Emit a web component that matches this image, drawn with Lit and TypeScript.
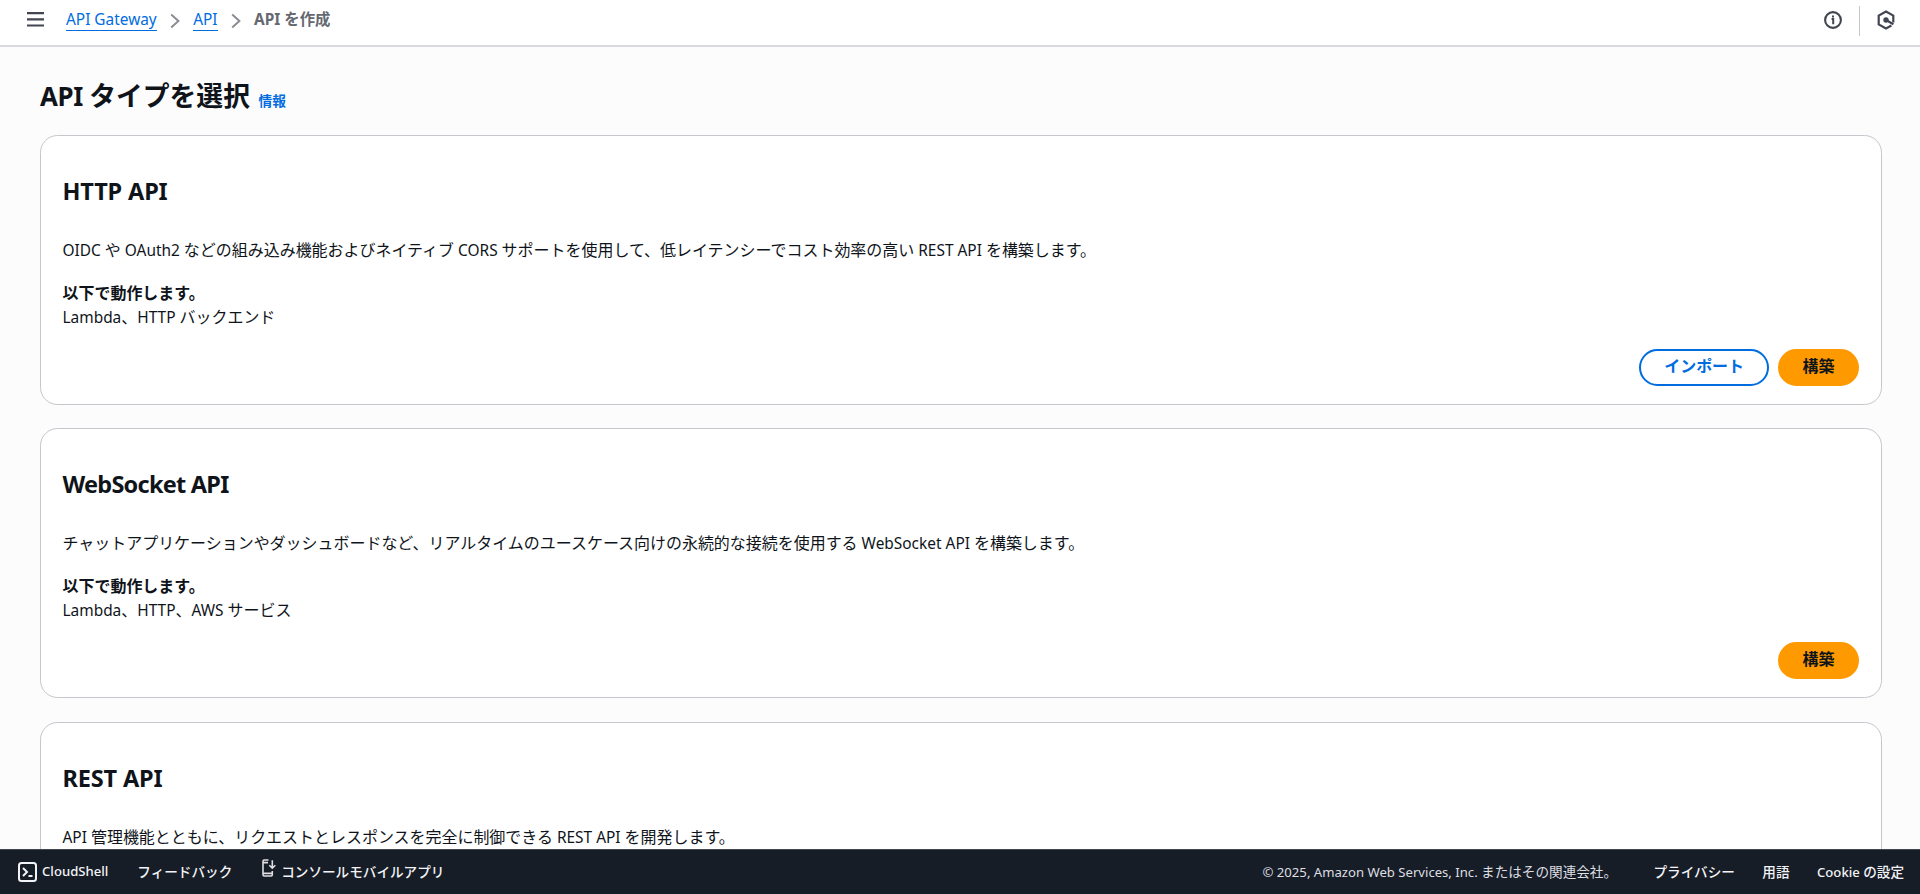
import { LitElement, html, css, svg } from "lit";
import { customElement, property } from "lit/decorators.js";
import { classMap } from "lit/directives/class-map.js";

interface ApiType {
  name: string;
  description: string;
  targets?: string;
  importable?: boolean;
}

const API_TYPES: ApiType[] = [
  {
    name: "HTTP API",
    description:
      "OIDC や OAuth2 などの組み込み機能およびネイティブ CORS サポートを使用して、低レイテンシーでコスト効率の高い REST API を構築します。",
    targets: "Lambda、HTTP バックエンド",
    importable: true,
  },
  {
    name: "WebSocket API",
    description:
      "チャットアプリケーションやダッシュボードなど、リアルタイムのユースケース向けの永続的な接続を使用する WebSocket API を構築します。",
    targets: "Lambda、HTTP、AWS サービス",
  },
  {
    name: "REST API",
    description: "API 管理機能とともに、リクエストとレスポンスを完全に制御できる REST API を開発します。",
  },
];

// Latin runs are set slightly smaller than the Japanese text around them.
const mixed = (text: string) =>
  text
    .split(/([\x20-\x7e©]+)/)
    .filter((part) => part)
    .map((part) => (/^[\x20-\x7e©]/.test(part) ? html`<span class="latin">${part}</span>` : part));

const latinStyles = css`
  .latin {
    font-size: 0.966em;
  }
`;

const chevron = html`<svg class="chevron" width="11" height="16" viewBox="0 0 11 16">
  ${svg`<path d="M1.2 1.4 8.4 8 1.2 14.6" fill="none" stroke="#8c8c94" stroke-width="2"/>`}
</svg>`;

@customElement("api-card")
export class ApiCard extends LitElement {
  @property({ attribute: false }) api!: ApiType;

  static styles = [
    latinStyles,
    css`
      :host {
        display: block;
        box-sizing: border-box;
        height: 269.5px;
        padding: 39px 22px 0 21.5px;
        border: 1px solid #c6c6cd;
        border-radius: 17.6px;
        background: #fff;
      }
      h2 {
        margin: 0;
        font-size: 23.5px;
        line-height: 32px;
        font-weight: 700;
        letter-spacing: -0.15px;
      }
      .compact {
        letter-spacing: -0.75px;
      }
      p {
        margin: 0;
        height: 24px;
        line-height: 24px;
        white-space: nowrap;
      }
      .description {
        margin-top: 31px;
      }
      .label {
        margin-top: 19px;
        font-weight: 700;
      }
      .actions {
        display: flex;
        justify-content: flex-end;
        gap: 9px;
        margin-top: 20px;
      }
      button {
        box-sizing: border-box;
        height: 37px;
        padding: 0 23px 5px;
        border: 2px solid #006ce0;
        border-radius: 22px;
        background: #fff;
        color: #006ce0;
        font: inherit;
        font-weight: 700;
      }
      .primary {
        padding: 0 22.5px 5px;
        border-color: #ff9900;
        background: #ff9900;
        color: #0f141a;
      }
    `,
  ];

  render() {
    const { name, description, targets, importable } = this.api;
    return html`
      <h2 class=${classMap({ compact: /[a-z]/.test(name) })}>${name}</h2>
      <p class="description">${mixed(description)}</p>
      ${targets
        ? html`
            <p class="label">以下で動作します。</p>
            <p>${mixed(targets)}</p>
            <div class="actions">
              ${importable ? html`<button>インポート</button>` : null}
              <button class="primary">構築</button>
            </div>
          `
        : null}
    `;
  }
}

@customElement("app-root")
export class AppRoot extends LitElement {
  static styles = [
    latinStyles,
    css`
      :host {
        display: flex;
        flex-direction: column;
        height: 894px;
        overflow: hidden;
        background: #fcfcfd;
        color: #0f141a;
        font-family: "Noto Sans", "Noto Sans CJK JP", sans-serif;
        font-size: 15.98px;
      }
      svg {
        display: block;
        flex: none;
      }
      .topbar {
        display: flex;
        flex: none;
        align-items: flex-start;
        justify-content: space-between;
        box-sizing: border-box;
        height: 47px;
        padding: 0 25px 0 27px;
        border-bottom: 2px solid #d9d9df;
        background: #fff;
      }
      .crumbs,
      .tools {
        display: flex;
        align-items: center;
        height: 40px;
      }
      .crumbs {
        font-size: 15.4px;
      }
      .tools {
        height: 39px;
      }
      .menu {
        margin-right: 22px;
      }
      .crumbs a {
        height: 21px;
        border-bottom: 1px solid #006ce0;
        color: #006ce0;
        line-height: 22px;
      }
      .chevron {
        margin: 2px 12.5px 0 13px;
      }
      .current {
        margin-top: -3px;
        color: #656871;
        font-weight: 700;
      }
      .divider {
        width: 1px;
        height: 30px;
        margin: 3px 17px 0 17px;
        background: #c6c6cd;
      }
      .content {
        flex: 1;
        min-height: 0;
        overflow: hidden;
        padding: 31px 38px 0 40px;
      }
      .heading {
        display: flex;
        align-items: baseline;
        gap: 8.5px;
        height: 57px;
      }
      h1 {
        margin: 0;
        font-size: 26.8px;
        line-height: 36px;
        font-weight: 700;
      }
      h1 .latin {
        letter-spacing: -0.4px;
      }
      .info {
        color: #006ce0;
        font-size: 13.7px;
        font-weight: 700;
      }
      .cards {
        display: flex;
        flex-direction: column;
        gap: 23.9px;
      }
      .footer {
        display: flex;
        flex: none;
        align-items: center;
        justify-content: space-between;
        box-sizing: border-box;
        height: 45px;
        padding: 0 16px 3px 18px;
        border-top: 1px solid #424650;
        background: #161d26;
        color: #f3f3f7;
        font-size: 13.6px;
        font-weight: 500;
        white-space: nowrap;
      }
      .group,
      .item {
        display: flex;
        align-items: center;
      }
      .group {
        gap: 27.5px;
      }
      .start {
        gap: 29px;
      }
      .item {
        gap: 5px;
      }
      .shell {
        margin-top: 3px;
      }
      .phone {
        margin: -6px 0 0 1px;
      }
      .legal {
        margin-right: 9px;
        color: #dedee3;
        font-weight: 400;
      }
    `,
  ];

  render() {
    return html`
      <header class="topbar">
        <nav class="crumbs">
          <svg class="menu" width="17" height="40" viewBox="0 0 17 40">
            <path d="M0 13.2h17M0 19.4h17M0 25.5h17" stroke="#424650" stroke-width="2.2" />
          </svg>
          <a>API Gateway</a>${chevron}<a>API</a>${chevron}<span class="current">API を作成</span>
        </nav>
        <div class="tools">
          <svg width="18" height="18" viewBox="0 0 18 18">
            <circle cx="9" cy="9" r="7.9" fill="none" stroke="#424650" stroke-width="2.1" />
            <path d="M7.6 8h1.6v5.2M9 4.4v2" fill="none" stroke="#424650" stroke-width="2" />
          </svg>
          <span class="divider"></span>
          <svg width="18" height="20" viewBox="0 0 18 20">
            <path d="M16.3 12.6V5.6L9 1.5 1.7 5.6v8.8L9 18.5l5.4-3" fill="none" stroke="#424650" stroke-width="2.2" />
            <circle cx="9" cy="10" r="2.7" fill="#424650" />
            <path d="m9 10 7.4 4.2" stroke="#424650" stroke-width="2.2" />
          </svg>
        </div>
      </header>
      <main class="content">
        <div class="heading">
          <h1>${mixed("API タイプを選択")}</h1>
          <a class="info">情報</a>
        </div>
        <div class="cards">${API_TYPES.map((api) => html`<api-card .api=${api}></api-card>`)}</div>
      </main>
      <footer class="footer">
        <div class="group start">
          <span class="item">
            <svg class="shell" width="19" height="20" viewBox="0 0 19 20">
              <rect x="1" y="1" width="17" height="18" rx="2.5" fill="none" stroke="#f3f3f7" stroke-width="2" />
              <path d="m5 6 4 4-4 4M10.5 14h4" fill="none" stroke="#f3f3f7" stroke-width="2" />
            </svg>
            <span>${mixed("CloudShell")}</span>
          </span>
          <span>フィードバック</span>
          <span class="item">
            <svg class="phone" width="14" height="18" viewBox="0 0 14 18">
              <path
                d="M6.5 1H2.2Q1 1 1 2.2v13.6Q1 17 2.2 17h6.9q1.2 0 1.2-1.2V12M1 3.6h5M1 14.4h9M10.3 1.2v7.6M7.3 6.2l3 3 3-3"
                fill="none"
                stroke="#dedee3"
                stroke-width="1.6"
              />
            </svg>
            <span>コンソールモバイルアプリ</span>
          </span>
        </div>
        <div class="group">
          <span class="legal">${mixed("© 2025, Amazon Web Services, Inc. またはその関連会社。")}</span>
          <span>プライバシー</span>
          <span>用語</span>
          <span>${mixed("Cookie の設定")}</span>
        </div>
      </footer>
    `;
  }
}
